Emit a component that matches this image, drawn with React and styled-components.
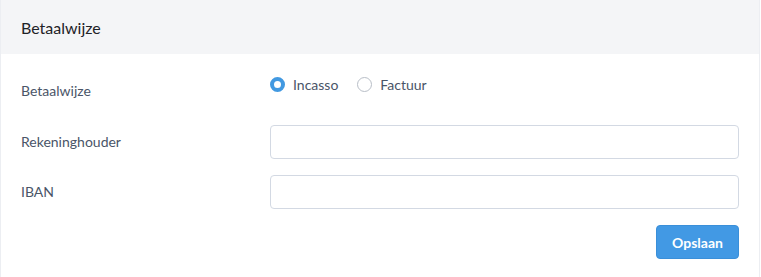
import React, { useState } from 'react';
import styled, { createGlobalStyle } from 'styled-components';

const GlobalStyle = createGlobalStyle`
  html, body {
    margin: 0;
    padding: 0;
    background: #fff;
  }
  body {
    font-family: 'Lato', 'Open Sans', sans-serif;
    font-size: 14px;
    color: #4a5568;
  }
  * { box-sizing: border-box; }
`;

const Card = styled.section`
  width: 760px;
  min-height: 277px;
  border-left: 1px solid #eceef2;
  border-right: 1px solid #eceef2;
  background: #fff;
`;

const Header = styled.header`
  height: 54px;
  display: flex;
  align-items: center;
  padding: 0 20px;
  background: #f4f5f7;
  font-size: 16px;
  color: #1f2328;
`;

const Body = styled.form`
  padding: 20px 20px 0 20px;
  display: flex;
  flex-direction: column;
  gap: 16px;
`;

const Row = styled.div`
  display: grid;
  grid-template-columns: 249px 1fr;
  align-items: start;
`;

const Label = styled.label`
  padding: ${p => (p.$tall ? '7px 0 8px' : '7px 0')};
  line-height: 20px;
  font-size: 14px;
  color: #4a5568;
`;

const RadioGroup = styled.div`
  display: flex;
  gap: 19px;
  line-height: 21px;
`;

const RadioOption = styled.label`
  display: flex;
  align-items: center;
  gap: 8px;
  cursor: pointer;
  color: #4a5568;
`;

const RadioDot = styled.span`
  width: 15px;
  height: 15px;
  border-radius: 50%;
  flex: none;
  background: #fff;
  border: ${p => (p.$checked ? '4.5px solid #4299e1' : '1px solid #b8bec7')};
`;

const Input = styled.input`
  height: 34px;
  width: 100%;
  border: 1px solid #d3d9e3;
  border-radius: 4px;
  padding: 0 10px;
  font: inherit;
  outline: none;
`;

const Actions = styled.div`
  display: flex;
  justify-content: flex-end;
`;

const Button = styled.button`
  height: 34px;
  width: 83px;
  border: 1px solid #3a8fd9;
  border-radius: 4px;
  background: #4299e4;
  color: #fff;
  font-family: inherit;
  font-size: 14px;
  font-weight: 700;
  cursor: pointer;
`;

export default function App() {
  const [method, setMethod] = useState('incasso');

  return (
    <>
      <GlobalStyle />
      <Card>
        <Header>Betaalwijze</Header>
        <Body onSubmit={e => e.preventDefault()}>
          <Row>
            <Label $tall>Betaalwijze</Label>
            <RadioGroup>
              <RadioOption onClick={() => setMethod('incasso')}>
                <RadioDot $checked={method === 'incasso'} />
                Incasso
              </RadioOption>
              <RadioOption onClick={() => setMethod('factuur')}>
                <RadioDot $checked={method === 'factuur'} />
                Factuur
              </RadioOption>
            </RadioGroup>
          </Row>
          <Row>
            <Label>Rekeninghouder</Label>
            <Input type="text" />
          </Row>
          <Row>
            <Label>IBAN</Label>
            <Input type="text" />
          </Row>
          <Actions>
            <Button type="submit">Opslaan</Button>
          </Actions>
        </Body>
      </Card>
    </>
  );
}
